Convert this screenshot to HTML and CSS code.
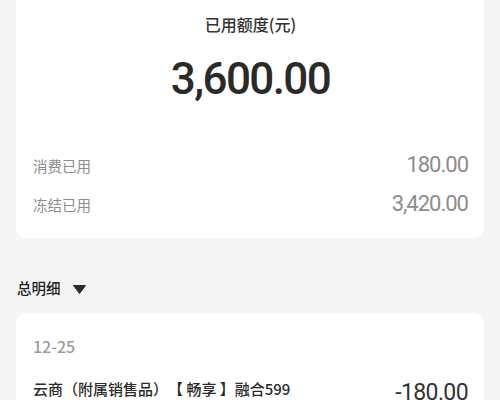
FILE: index.html
```html
<!DOCTYPE html>
<html lang="zh-CN">
<head>
<meta charset="utf-8">
<title>已用额度</title>
<link rel="stylesheet" href="styles.css">
</head>
<body>
<div class="page">
  <section class="card summary">
    <div class="summary-title">已用额度(元)</div>
    <div class="summary-amount">3,600.00</div>
    <div class="rows">
      <div class="row">
        <span class="row-label">消费已用</span>
        <span class="row-value">180.00</span>
      </div>
      <div class="row">
        <span class="row-label">冻结已用</span>
        <span class="row-value">3,420.00</span>
      </div>
    </div>
  </section>

  <div class="section-head">
    <span class="section-title">总明细</span>
    <svg class="caret" width="13" height="9" viewBox="0 0 13 9"><polygon points="0.5,0.5 12.5,0.5 6.5,8.5" fill="#2b2b2b" stroke="#2b2b2b" stroke-width="1" stroke-linejoin="round"/></svg>
  </div>

  <section class="card detail">
    <div class="detail-date">12-25</div>
    <div class="detail-row">
      <span class="detail-name">云商（附属销售品）【 畅享 】融合599</span>
      <span class="detail-amount">-180.00</span>
    </div>
  </section>
</div>
</body>
</html>
```

FILE: styles.css
```css
html, body {
  margin: 0;
  padding: 0;
  background: #f5f5f5;
}

body {
  font-family: "Noto Sans CJK SC", "Noto Sans", sans-serif;
  color: #333;
  text-spacing-trim: space-all;
}

.page {
  padding: 0 16px;
}

.card {
  background: #ffffff;
  border-radius: 10px;
}

.summary {
  border-radius: 0 0 10px 10px;
  padding: 12px 16px 19px 17px;
}

.summary-title {
  text-align: center;
  font-size: 16px;
  font-weight: 500;
  line-height: 24px;
  color: #333;
}

.summary-amount {
  margin-top: 17px;
  text-align: center;
  font-family: Roboto, "Liberation Sans", sans-serif;
  font-size: 44px;
  font-weight: 500;
  line-height: 52px;
  letter-spacing: -1.6px;
  color: #2a2a2a;
}

.rows {
  margin-top: 46px;
  display: flex;
  flex-direction: column;
  gap: 10px;
}

.row {
  display: flex;
  justify-content: space-between;
  align-items: baseline;
}

.row-label {
  font-size: 14.5px;
  line-height: 28px;
  color: #8c8c8c;
}

.row-value {
  font-family: Roboto, "Liberation Sans", sans-serif;
  font-size: 22px;
  line-height: 28px;
  letter-spacing: -1px;
  color: #8c8c8c;
}

.section-head {
  margin-top: 38px;
  margin-bottom: 13px;
  display: flex;
  align-items: center;
  gap: 12px;
  padding-left: 1px;
  height: 24px;
}

.section-title {
  font-size: 14.5px;
  font-weight: 500;
  line-height: 24px;
  color: #222;
}

.caret {
  display: block;
  margin-top: 2px;
}

.detail {
  padding: 21px 16px 20px 17px;
}

.detail-date {
  font-size: 16px;
  font-weight: 500;
  line-height: 24px;
  color: #9c9c9c;
}

.detail-row {
  margin-top: 19px;
  display: flex;
  justify-content: space-between;
  align-items: flex-start;
}

.detail-name {
  font-size: 15px;
  font-weight: 500;
  line-height: 24px;
  color: #2a2a2a;
}

.detail-amount {
  margin-top: 1px;
  font-family: Roboto, "Liberation Sans", sans-serif;
  font-size: 23px;
  line-height: 30px;
  letter-spacing: -0.6px;
  color: #333;
}
```
